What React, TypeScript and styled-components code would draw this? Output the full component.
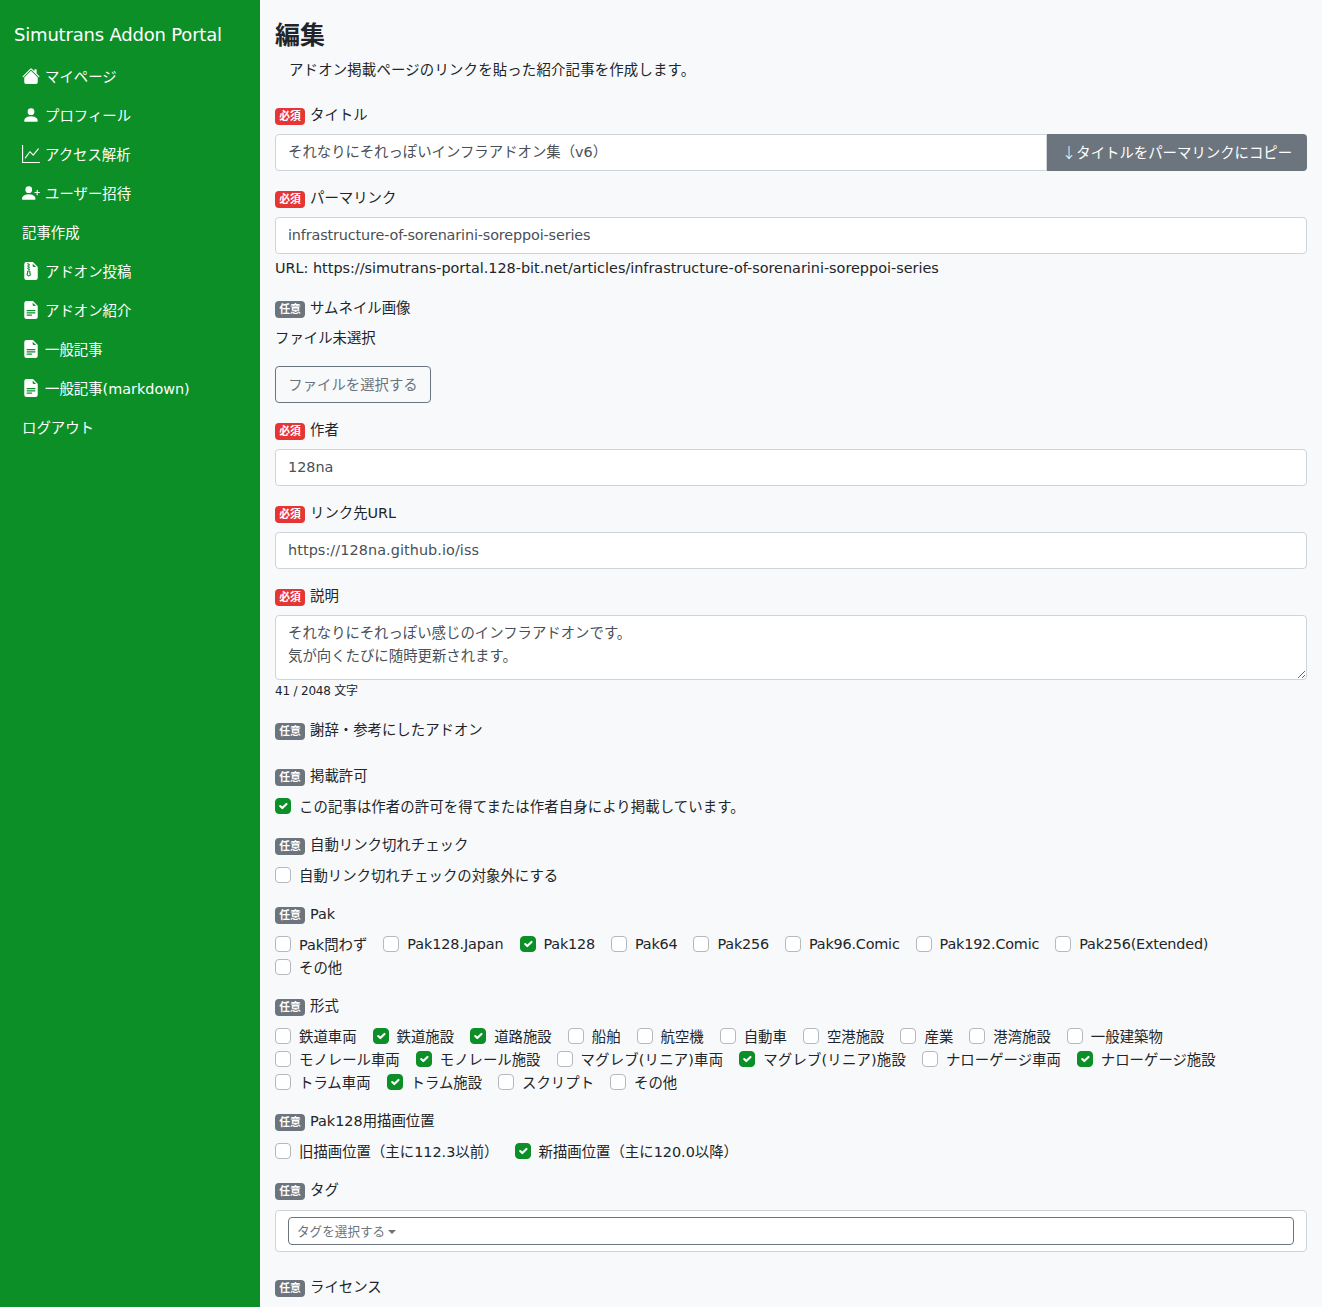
import styled, { createGlobalStyle } from "styled-components";
import {
  BsFileEarmarkTextFill,
  BsFileEarmarkZipFill,
  BsGraphUp,
  BsHouseFill,
  BsPersonFill,
  BsPersonPlusFill,
} from "react-icons/bs";

const GlobalStyle = createGlobalStyle`
  html, body {
    margin: 0;
    height: 100%;
    overflow: hidden;
  }
  body {
    font-family: "DejaVu Sans", "Noto Sans CJK JP", sans-serif;
    font-size: 14.4px;
    color: #212529;
    background: #f8f9fa;
  }
  * {
    box-sizing: border-box;
  }
`;

const Layout = styled.div`
  display: flex;
  height: 100vh;
`;

const Sidebar = styled.aside`
  flex: 0 0 260px;
  background: #0c8f27;
  color: #fff;
`;

const Brand = styled.div`
  height: 56px;
  padding: 1px 0 0 14px;
  font-size: 18px;
  line-height: 68px;
  letter-spacing: -0.19px;
`;

const NavItem = styled.a`
  display: flex;
  align-items: center;
  gap: 5px;
  height: 39px;
  padding-left: 22px;
  color: #fff;

  svg {
    flex: 0 0 18px;
    width: 18px;
    height: 18px;
  }
`;

const Main = styled.main`
  flex: 1;
  min-width: 0;
  padding: 0 15px;
  overflow: hidden;
`;

const Heading = styled.h2`
  margin: 0;
  height: 58px;
  padding-top: 18px;
  font-size: 25px;
  line-height: 36px;
  font-weight: 700;
`;

const Lead = styled.p`
  margin: 0;
  height: 46px;
  padding: 1px 0 0 14px;
  line-height: 23px;
  letter-spacing: 0.18px;
`;

const Group = styled.div`
  display: flow-root;
  margin-bottom: 16px;
`;

const LabelRow = styled.div`
  display: flex;
  align-items: flex-start;
  gap: 5px;
  height: 20px;
  margin-bottom: 10px;
  line-height: 22px;
`;

const Badge = styled.span<{ $required?: boolean }>`
  display: inline-block;
  width: 30px;
  height: 17px;
  margin-top: 4px;
  border-radius: 4px;
  background: ${(p) => (p.$required ? "#e53535" : "#6c757d")};
  color: #fff;
  font-size: 10.8px;
  font-weight: 700;
  line-height: 17px;
  text-align: center;
`;

const InputRow = styled.div`
  display: flex;
`;

const TextInput = styled.input<{ $tracking?: number }>`
  flex: 1;
  display: block;
  width: 100%;
  height: 37px;
  padding: 0 12px 2px;
  border: 1px solid #ced4da;
  border-radius: 4px;
  background: #fff;
  color: #495057;
  font: inherit;
  letter-spacing: ${(p) => p.$tracking ?? 0}px;

  ${InputRow} & {
    padding-bottom: 4px;
    border-radius: 4px 0 0 4px;
  }
`;

const CopyButton = styled.button`
  flex: 0 0 260px;
  height: 37px;
  padding: 0 0 3px;
  border: 0;
  border-radius: 0 4px 4px 0;
  background: #6c757d;
  color: #fff;
  font: inherit;
`;

const CopyArrow = styled.span`
  font-family: "Noto Sans CJK JP", sans-serif;
  font-weight: 300;
`;

const UrlLine = styled.div`
  margin-top: 2px;
  line-height: 25px;
`;

const FileState = styled.div`
  height: 39px;
  line-height: 22px;
`;

const FileButton = styled.button`
  display: block;
  width: 156px;
  height: 37px;
  padding: 0 0 2px;
  border: 1px solid #6c757d;
  border-radius: 4px;
  background: transparent;
  color: #6c757d;
  font: inherit;
`;

const TextArea = styled.textarea`
  display: block;
  width: 100%;
  height: 65px;
  padding: 6px 12px;
  border: 1px solid #ced4da;
  border-radius: 4px;
  background: #fff;
  color: #495057;
  font: inherit;
  line-height: 23px;
  resize: vertical;
`;

const Counter = styled.div`
  font-size: 12px;
  line-height: 23px;
  letter-spacing: -0.2px;
`;

const CheckList = styled.div`
  display: flex;
  flex-wrap: wrap;
  column-gap: 16px;
  max-width: 1000px;
  margin: -1px 0 1px;
`;

const CheckItem = styled.label<{ $tracking?: number }>`
  display: inline-flex;
  align-items: center;
  gap: 8px;
  height: 23px;
  letter-spacing: ${(p) => p.$tracking ?? 0}px;
`;

const CheckBox = styled.input.attrs({ type: "checkbox", readOnly: true })`
  appearance: none;
  flex: 0 0 16px;
  width: 16px;
  height: 16px;
  margin: 0;
  border: 1px solid #b4b9be;
  border-radius: 4px;
  background: #fff;

  &:checked {
    border-color: #0c8f27;
    background: #0c8f27 url("data:image/svg+xml,%3csvg xmlns='http://www.w3.org/2000/svg' viewBox='0 0 20 20'%3e%3cpath fill='none' stroke='%23fff' stroke-linecap='round' stroke-linejoin='round' stroke-width='3' d='M6 10l3 3l6-6'/%3e%3c/svg%3e") center / 100% no-repeat;
  }
`;

const TagCard = styled.div`
  height: 42px;
  margin: 11px 0 8px;
  padding: 6px 12px;
  border: 1px solid #ced4da;
  border-radius: 4px;
  background: #fff;
`;

const TagButton = styled.div`
  display: flex;
  align-items: center;
  gap: 3px;
  height: 28px;
  padding: 0 8px 2px;
  border: 1px solid #6c757d;
  border-radius: 4px;
  color: #6c757d;
  font-size: 12.6px;
`;

const Caret = styled.span`
  margin-top: 3px;
  border-top: 4px solid #6c757d;
  border-left: 4px solid transparent;
  border-right: 4px solid transparent;
`;

type Check = [string, boolean?, number?];

const navItems = [
  { icon: <BsHouseFill />, label: "マイページ" },
  { icon: <BsPersonFill />, label: "プロフィール" },
  { icon: <BsGraphUp />, label: "アクセス解析" },
  { icon: <BsPersonPlusFill />, label: "ユーザー招待" },
  { label: "記事作成" },
  { icon: <BsFileEarmarkZipFill />, label: "アドオン投稿" },
  { icon: <BsFileEarmarkTextFill />, label: "アドオン紹介" },
  { icon: <BsFileEarmarkTextFill />, label: "一般記事" },
  { icon: <BsFileEarmarkTextFill />, label: "一般記事(markdown)" },
  { label: "ログアウト" },
];

const pakChecks: Check[] = [
  ["Pak問わず"],
  ["Pak128.Japan", false, -0.1],
  ["Pak128", true, -0.2],
  ["Pak64", false, -0.2],
  ["Pak256", false, -0.2],
  ["Pak96.Comic", false, -0.2],
  ["Pak192.Comic", false, -0.2],
  ["Pak256(Extended)", false, -0.2],
  ["その他"],
];

const typeChecks: Check[] = [
  ["鉄道車両"],
  ["鉄道施設", true],
  ["道路施設", true],
  ["船舶"],
  ["航空機"],
  ["自動車"],
  ["空港施設"],
  ["産業"],
  ["港湾施設"],
  ["一般建築物"],
  ["モノレール車両"],
  ["モノレール施設", true],
  ["マグレブ(リニア)車両", false, 0.18],
  ["マグレブ(リニア)施設", true, 0.18],
  ["ナローゲージ車両"],
  ["ナローゲージ施設", true],
  ["トラム車両"],
  ["トラム施設", true],
  ["スクリプト"],
  ["その他"],
];

const positionChecks: Check[] = [
  ["旧描画位置（主に112.3以前）"],
  ["新描画位置（主に120.0以降）", true],
];

function Label({ required, children }: { required?: boolean; children: string }) {
  return (
    <LabelRow>
      <Badge $required={required}>{required ? "必須" : "任意"}</Badge>
      {children}
    </LabelRow>
  );
}

function Checks({ items }: { items: Check[] }) {
  return (
    <CheckList>
      {items.map(([label, checked, tracking]) => (
        <CheckItem key={label} $tracking={tracking}>
          <CheckBox defaultChecked={checked} />
          {label}
        </CheckItem>
      ))}
    </CheckList>
  );
}

export default function App() {
  return (
    <>
      <GlobalStyle />
      <Layout>
        <Sidebar>
          <Brand>Simutrans Addon Portal</Brand>
          <nav>
            {navItems.map((item) => (
              <NavItem key={item.label}>
                {item.icon}
                {item.label}
              </NavItem>
            ))}
          </nav>
        </Sidebar>

        <Main>
          <Heading>編集</Heading>
          <Lead>アドオン掲載ページのリンクを貼った紹介記事を作成します。</Lead>

          <Group>
            <Label required>タイトル</Label>
            <InputRow>
              <TextInput readOnly value="それなりにそれっぽいインフラアドオン集（v6）" />
              <CopyButton>
                <CopyArrow>↓</CopyArrow>タイトルをパーマリンクにコピー
              </CopyButton>
            </InputRow>
          </Group>

          <Group>
            <Label required>パーマリンク</Label>
            <TextInput readOnly $tracking={-0.14} value="infrastructure-of-sorenarini-soreppoi-series" />
            <UrlLine>URL: https://simutrans-portal.128-bit.net/articles/infrastructure-of-sorenarini-soreppoi-series</UrlLine>
          </Group>

          <Group>
            <Label>サムネイル画像</Label>
            <FileState>ファイル未選択</FileState>
            <FileButton>ファイルを選択する</FileButton>
          </Group>

          <Group>
            <Label required>作者</Label>
            <TextInput readOnly value="128na" />
          </Group>

          <Group>
            <Label required>リンク先URL</Label>
            <TextInput readOnly $tracking={0.08} value="https://128na.github.io/iss" />
          </Group>

          <Group>
            <Label required>説明</Label>
            <TextArea
              readOnly
              value={"それなりにそれっぽい感じのインフラアドオンです。\n気が向くたびに随時更新されます。"}
            />
            <Counter>41 / 2048 文字</Counter>
          </Group>

          <Group>
            <Label>謝辞・参考にしたアドオン</Label>
          </Group>

          <Group>
            <Label>掲載許可</Label>
            <Checks items={[["この記事は作者の許可を得てまたは作者自身により掲載しています。", true, 0.08]]} />
          </Group>

          <Group>
            <Label>自動リンク切れチェック</Label>
            <Checks items={[["自動リンク切れチェックの対象外にする"]]} />
          </Group>

          <Group>
            <Label>Pak</Label>
            <Checks items={pakChecks} />
          </Group>

          <Group>
            <Label>形式</Label>
            <Checks items={typeChecks} />
          </Group>

          <Group>
            <Label>Pak128用描画位置</Label>
            <Checks items={positionChecks} />
          </Group>

          <Group>
            <Label>タグ</Label>
            <TagCard>
              <TagButton>
                タグを選択する
                <Caret />
              </TagButton>
            </TagCard>
          </Group>

          <Group>
            <Label>ライセンス</Label>
          </Group>
        </Main>
      </Layout>
    </>
  );
}
